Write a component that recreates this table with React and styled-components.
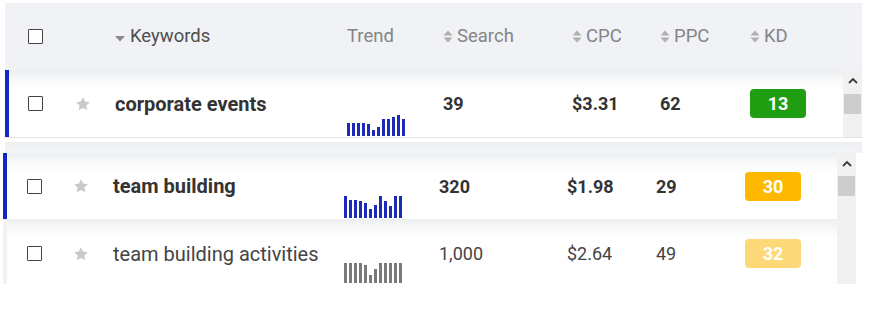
import React from 'react'
import styled, { createGlobalStyle } from 'styled-components'

const GlobalStyle = createGlobalStyle`
  body {
    margin: 0;
    background: #fff;
    font-family: Roboto, "Liberation Sans", Arial, sans-serif;
  }
`

const cols1 = '47px 40px 232px 96px 129px 88px 90px 1fr'
const cols2 = '46px 40px 231px 95px 128px 89px 89px 1fr'

const rows = [
  { kw: 'corporate events', search: '39', cpc: '$3.31', ppc: '62', kd: 13, kdColor: '#1f9e12', bold: true, active: true,
    trend: [13, 13, 13, 13, 12, 6, 9, 17, 17, 19, 21, 17], barColor: '#1b2bb8' },
  { kw: 'team building', search: '320', cpc: '$1.98', ppc: '29', kd: 30, kdColor: '#ffb800', bold: true, active: true,
    trend: [22, 18, 18, 17, 15, 9, 13, 22, 17, 12, 22, 22], barColor: '#1b2bb8' },
  { kw: 'team building activities', search: '1,000', cpc: '$2.64', ppc: '49', kd: 32, kdColor: '#fdd878', bold: false, active: false,
    trend: [20, 20, 20, 20, 18, 8, 14, 20, 20, 20, 20, 20], barColor: '#7a7a7a' },
]

function SortIcon() {
  return (
    <svg width="10" height="13" viewBox="0 0 10 13">
      <path d="M5 0.5 L9.5 5.5 H0.5 Z M5 12.5 L9.5 7.5 H0.5 Z" fill="#b0b0b0" />
    </svg>
  )
}

function Caret() {
  return (
    <CaretSvg width="10" height="6" viewBox="0 0 10 6">
      <path d="M0 0 H10 L5 5.5 Z" fill="#8a8a8a" />
    </CaretSvg>
  )
}

function Star() {
  return (
    <svg width="16" height="16" viewBox="0 0 24 24">
      <path d="M12 1.8l3.1 6.6 7.2.9-5.3 5 1.4 7.1L12 17.9l-6.4 3.5 1.4-7.1-5.3-5 7.2-.9z" fill="#c9c9c9" />
    </svg>
  )
}

function Chevron() {
  return (
    <svg width="10" height="7" viewBox="0 0 10 7">
      <path d="M1 6 L5 2 L9 6" fill="none" stroke="#3c3c3c" strokeWidth="1.8" />
    </svg>
  )
}

function KeywordRow({ row, cols, pad, height, top }) {
  return (
    <Row $cols={cols} $pad={pad} $h={height} $top={top} $active={row.active}>
      <Cell><Check /></Cell>
      <Cell><Star /></Cell>
      <Keyword $bold={row.bold}>{row.kw}</Keyword>
      <TrendCell>
        <Bars>
          {row.trend.map((h, i) => (
            <Bar key={i} $color={row.barColor} style={{ height: h }} />
          ))}
        </Bars>
      </TrendCell>
      <Num $bold={row.bold}>{row.search}</Num>
      <Num $bold={row.bold}>{row.cpc}</Num>
      <Num $bold={row.bold}>{row.ppc}</Num>
      <Cell><Badge $bg={row.kdColor}>{row.kd}</Badge></Cell>
    </Row>
  )
}

export default function App() {
  return (
    <>
      <GlobalStyle />
      <Page>
        <Header>
          <HeadCell><Check /></HeadCell>
          <HeadCell />
          <HeadCell $dark $gap={5}><Caret />Keywords</HeadCell>
          <HeadCell>Trend</HeadCell>
          <HeadCell><SortIcon />Search</HeadCell>
          <HeadCell><SortIcon />CPC</HeadCell>
          <HeadCell><SortIcon />PPC</HeadCell>
          <HeadCell><SortIcon />KD</HeadCell>
        </Header>

        <Panel $left={5} $width={857}>
          <Rows>
            <KeywordRow row={rows[0]} cols={cols1} pad={19} height={67} top={0} />
          </Rows>
          <Scrollbar>
            <Chevron />
            <Thumb $top={10} />
          </Scrollbar>
        </Panel>

        <Divider />

        <Panel $left={3} $width={853}>
          <Rows>
            <KeywordRow row={rows[1]} cols={cols2} pad={20} height={66} top={0} />
            <KeywordRow row={rows[2]} cols={cols2} pad={20} height={65} top={4} />
          </Rows>
          <Scrollbar>
            <Chevron />
            <Thumb $top={9} />
          </Scrollbar>
        </Panel>
      </Page>
    </>
  )
}

const Page = styled.div`
  width: 870px;
  height: 321px;
  background: #fff;
  padding-top: 3px;
  box-sizing: border-box;
  overflow: hidden;
`

const Header = styled.div`
  margin-left: 5px;
  width: 857px;
  height: 67px;
  box-sizing: border-box;
  padding-left: 23px;
  background: #f0f2f5;
  display: grid;
  grid-template-columns: ${cols1};
  align-items: center;
`

const HeadCell = styled.div`
  display: flex;
  align-items: center;
  gap: ${p => p.$gap ?? 4}px;
  font-size: 18.5px;
  color: ${p => (p.$dark ? '#4e4e4e' : '#858585')};
  padding-bottom: 1px;
  white-space: nowrap;
  svg { flex: none; }
`

const CaretSvg = styled.svg`
  margin-top: 5px;
`

const Check = styled.span`
  display: block;
  width: 15px;
  height: 15px;
  box-sizing: border-box;
  border: 1.5px solid #444;
  border-radius: 1px;
  background: #fff;
`

const Panel = styled.div`
  margin-left: ${p => p.$left}px;
  width: ${p => p.$width}px;
  display: flex;
`

const Rows = styled.div`
  flex: 1;
  display: flex;
  flex-direction: column;
`

const Row = styled.div`
  height: ${p => p.$h}px;
  box-sizing: border-box;
  border-left: 4px solid ${p => (p.$active ? '#1426c4' : '#f1f2f4')};
  padding-left: ${p => p.$pad}px;
  padding-top: ${p => p.$top}px;
  background: linear-gradient(to bottom, #eceef0 0, #f6f7f8 8px, #fff 20px);
  display: grid;
  grid-template-columns: ${p => p.$cols};
  align-items: center;
`

const Cell = styled.div`
  display: flex;
  align-items: center;
`

const Keyword = styled.div`
  font-size: 20px;
  font-weight: ${p => (p.$bold ? 700 : 400)};
  color: ${p => (p.$bold ? '#333' : '#444')};
  white-space: nowrap;
`

const TrendCell = styled.div`
  align-self: stretch;
  display: flex;
  align-items: flex-end;
  padding-bottom: 1px;
`

const Bars = styled.div`
  display: flex;
  align-items: flex-end;
  gap: 2.5px;
`

const Bar = styled.span`
  display: block;
  width: 2.5px;
  background: ${p => p.$color};
`

const Num = styled.div`
  font-size: 18px;
  font-weight: ${p => (p.$bold ? 700 : 400)};
  color: ${p => (p.$bold ? '#333' : '#444')};
`

const Badge = styled.div`
  width: 56px;
  height: 29px;
  border-radius: 4px;
  background: ${p => p.$bg};
  color: #fff;
  font-size: 18px;
  font-weight: 700;
  display: flex;
  align-items: center;
  justify-content: center;
`

const Scrollbar = styled.div`
  width: 19px;
  flex: none;
  background: #f1f1f1;
  display: flex;
  flex-direction: column;
  align-items: center;
  padding-top: 7px;
  box-sizing: border-box;
`

const Thumb = styled.div`
  margin-top: ${p => p.$top}px;
  width: 17px;
  height: 20px;
  background: #cdcdcd;
`

const Divider = styled.div`
  margin-left: 5px;
  width: 857px;
  height: 16px;
  background: linear-gradient(
    to bottom,
    #e3e4e6 0,
    #e3e4e6 1px,
    #fff 1px,
    #fff 5px,
    #edeff2 5px,
    #f3f4f6 100%
  );
`
